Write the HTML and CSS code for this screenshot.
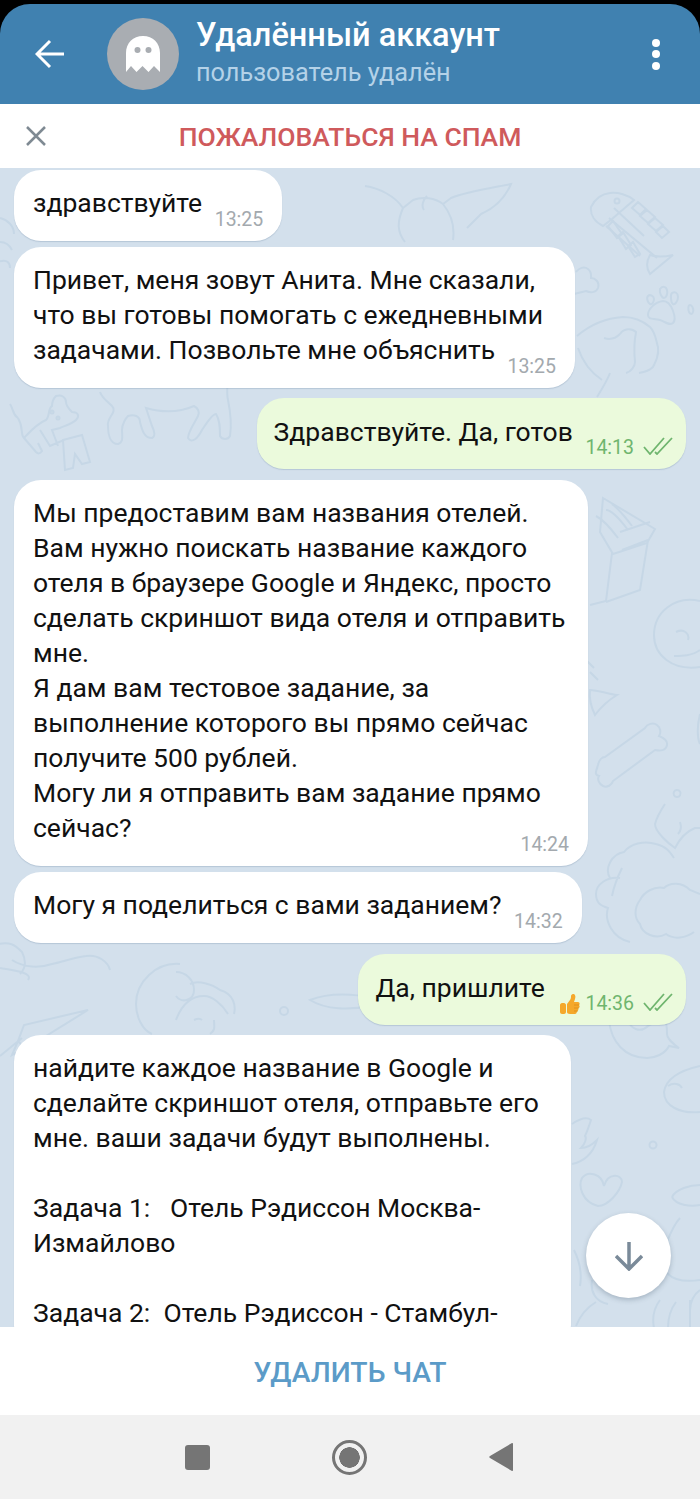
FILE: index.html
```html
<!DOCTYPE html>
<html lang="ru">

<head>
  <meta charset="UTF-8" />
  <title>Удалённый аккаунт</title>
  <link rel="stylesheet" href="styles.css">
</head>

<body>

  <div class="screen">

    <header class="chat-header">
      <svg class="back-icon" viewBox="0 0 30 30" width="30" height="30">
        <path d="M29 15H2M15 2L2 15l13 13" />
      </svg>
      <div class="avatar">
        <svg viewBox="0 0 34 36" width="34" height="36">
          <path class="ghost" d="M0 36V17C0 7 7 0 17 0s17 7 17 17v19l-6-6-5.500 6-6-6-6 6-5.500-6z" />
          <circle class="ghost-eye" cx="11.500" cy="14" r="3" />
          <circle class="ghost-eye" cx="22.500" cy="14" r="3" />
        </svg>
      </div>
      <div class="chat-title">
        <div class="chat-name">Удалённый аккаунт</div>
        <div class="chat-status">пользователь удалён</div>
      </div>
      <div class="menu-dots"><span></span><span></span><span></span></div>
    </header>

    <div class="spam-bar">
      <svg class="close-icon" viewBox="0 0 20 20" width="20" height="20">
        <path d="M1 1l18 18M19 1L1 19" />
      </svg>
      <span class="spam-link">ПОЖАЛОВАТЬСЯ НА СПАМ</span>
    </div>

    <main class="chat">

      <!-- faint wallpaper doodles, viewBox uses screen coordinates -->
      <svg class="wallpaper" viewBox="0 168 700 1160" width="700" height="1160">
        <!-- duck, top middle -->
        <path d="M365 186c14 2 30 10 38 22l10-8c10-4 22-2 30 4l8-6c14-6 40-10 60-14-6 14-16 24-30 30l-14 14M403 208c-6 14-6 24 2 34M443 204c8 10 12 22 10 36M427 196c-4 4-6 10-3 14" />
        <!-- fish skeleton -->
        <path d="M634 200c-6-5-16-8-24-7-10 1-16 8-19 14-1 8 4 15 12 19l9-7zM609 218l48 40M614 208l30 28M606 226l34 30" />
        <path d="M632 208l6-6 8 7-6 6zM640 216l7-6 8 7-7 6zM648 224l7-6 8 7-7 6zM656 232l7-6 6 6-7 6zM608 226l5-5 9 13-5 4zM618 236l5-4 8 13-5 4zM628 246l5-4 7 12-5 3z" />
        <path d="M650 255c6 2 14 2 23 0l-23 19c-4-6-4-12 0-19z" />
        <circle cx="617" cy="201" r="2.500" />
        <!-- paw -->
        <path d="M663 301c-8 1-15 8-15 14 0 5 6 3 12 5s9 6 13 3c4-4-1-22-10-22zM660 289c2-3 6-3 7 1s-1 8-3 8-5-5-4-9zM672 293c3-2 6 0 6 4s-3 8-5 7-3-9-1-11zM648 296c2-2 6 0 6 3s-2 6-4 5-4-6-2-8zM690 305c2 0 4 4 3 7s-3 2-4 0-1-7 1-7z" />
        <!-- bone beside bubble 2 -->
        <path d="M576 272c3-4 8-6 12-3 4 3 3 7 3 9 4 0 9 4 7 10-2 5-8 5-12 3l-12 3" />
        <!-- bird under paw -->
        <path d="M577 336c14-12 30-18 46-19 12 0 20 4 27 10 6 6 6 14 8 20 1 8-2 14-5 20-3 3-8 5-14 6M620 334c4-6 12-6 16-2-2 10-2 20-1 30 0 4-4 10-9 11M620 334c-4 4-10 6-16 4M578 348c4 12 12 24 24 32M610 373c-3 8-8 16-13 24" />
        <!-- left edge scraps -->
        <path d="M0 218c8 2 14 8 14 16M0 242c6 0 10 4 12 8" />
        <path d="M-2 262c10-4 12 2 12 6" />
        <!-- dog with sock -->
        <path d="M10 404c4 6 2 10 8 14M18 418c6 10 2 16 6 20 2-2 12-14 22-18 4-4 2-12 6-14 0-4 2-8 4-10 6-2 10 2 10 6 0 4 4 8 6 10 6 0 8 4 4 8-4 4-12 6-16 8l-8 2 6 16M24 438l12 14c2 2 4 2 6-1l-4-8M40 430l10 16 14-6" />
        <path d="M63 440l19-5 8 27-8 2-7-10-2 14-8 2z" />
        <circle cx="52" cy="412" r="1.500" /><circle cx="58" cy="418" r="1.500" />
        <!-- big animal, behind first bubbles -->
        <path d="M100 392c2 6 8 10 12 14 6 6-6 12-4 20 0 8 2 18 10 18 6-2 4-8 4-14 0-6 4-12 6-14 6-2 12 0 12 6 2 8 4 16 12 16 4-2 2-8 0-12-2-6-4-12-6-18 14 4 30 6 48-2 4 2 6 6 4 10-4 8-10 16-10 22 4 6 10 0 14-8 4-6 10-16 14-16 4 6 4 14 4 22 2 4 8 4 10 0 2-12 0-26-2-36-2-8 0-18 0-26" />
        <!-- box -->
        <path d="M603 498l52 31-8 14-34 11-13-22zM612 553l-6 48-16 4M648 540l-8 50-34 12M620 532l30-10M622 550l26-10" />
        <path d="M606 510c6 0 16 12 22 20M596 516c8 4 16 14 22 22M612 504c8 6 14 14 20 22" />
        <!-- circle on right -->
        <path d="M700 601c-26-6-46 12-46 34 0 20 18 36 46 32M676 632c8-4 14 2 12 8M674 656c8 0 18 0 26-6" />
        <!-- fish tail under box -->
        <path d="M590 672l8 8M586 660l8 8M590 690c8 0 18 4 27 5-10 6-16 12-22 20-4-8-6-16-5-25z" />
        <path d="M700 714c-3 12-3 24 0 30" />
        <!-- bone -->
        <path d="M605 757l40-29c2-4 8-6 12-3 4 3 4 8 2 11 4 2 9 4 8 9-1 6-7 6-12 5l-42 31c-1 4-6 7-10 5-4-2-6-7-4-10-5-1-3-5-1-11 1-5 4-8 7-8z" />
        <!-- bird and clouds -->
        <path d="M665 804c-4 6-8 12-10 20 0 8 14 20 20 24 4-8 10-16 20-20 2 0 4 0 5 0M677 790a3.500 3.500 0 1 0 .1 0M680 822c2 6 0 10-2 12" />
        <path d="M610 878c-6-10 2-24 14-26 6-8 20-12 32-8 10 2 14 8 18 14M622 868c-4 8-8 18-10 28M620 878c-12-2-24 6-24 16s6 12 12 14c-4 12 4 30 22 34M640 900c4-8 14-14 24-12 6-6 18-6 26 2l10 4M640 900c-6 8-6 18 0 24 2 10 16 16 26 10 8 6 20 4 28-2" />
        <!-- left, between bubbles 5 and 7 -->
        <path d="M-2 944c12-2 16 0 24 8 4 8 4 16-2 22M12 960c12 8 28 8 40 4 10-2 20-6 34-8 12-2 22 6 24 14M0 968c10 2 34 4 28 12" />
        <!-- paper plane -->
        <path d="M88 1010l-64 15-6 16 7 8 63-39zM18 1041l-6 14 26-14M0 1056l22-18" />
        <!-- round face -->
        <path d="M180 964c-24-2-44 18-44 40 0 12 6 26 16 30M176 972c10 0 18 8 18 18s-12 14-18 6M190 984c8-4 22 0 30 6 14 4 16 16 14 24M176 1020c6-16 16-24 28-24 8 0 18 8 24 18M194 1020c4-2 6-2 8 0M214 1020c0 6 2 10-4 14" />
        <circle cx="284" cy="1011" r="4" />
        <path d="M310 1000c20-8 46-6 62-2 6 2 4 6-2 8-20 4-44 4-60-6z" />
        <!-- circle with heart -->
        <path d="M609 1020c2 22 16 38 38 38 8 0 18-4 22-12l10 2c-6-4-12-10-12-14 0-6 0-10-2-14M628 1020c2 8 12 14 20 6 4-2 8-4 8-6" />
        <!-- right, below bubble 6 -->
        <path d="M700 1066c-18 4-34 12-36 26 0 14 16 22 36 20M668 1086c6-4 12-2 14 2" />
        <!-- wing -->
        <path d="M572 1124c6-4 14-8 19-4-2 6-4 12-6 16 2 2 0 8-4 12 4 0 10-2 16-8-4 14-14 22-25 24" />
        <circle cx="653" cy="1145" r="3.500" />
        <!-- heart -->
        <path d="M604 1186c-2-12-16-16-22-8-4 8 0 24 16 28 10 0 22-14 24-24 0-8-14-10-18 4z" />
        <!-- halo and angel -->
        <path d="M672 1197c4-8 18-12 28-12M672 1197c4 8 18 10 28 8" />
        <path d="M680 1218c-6 6-10 16-14 26M666 1244c-4 10-4 20 2 30 6 6 18 8 32 6M660 1300c-6 8-8 18-6 28M676 1302c-6 8-8 18-8 26M690 1300v28M700 1290c-6 4-10 12-10 20" />
        <path d="M574 1250c6 12 8 24 6 36M576 1326c4-10 10-18 20-24M592 1280c-2 12 4 22 16 24" />
      </svg>

      <div class="bubble in first">
        здравствуйте
        <span class="meta-inline">13:25</span>
      </div>

      <div class="bubble in w-561 gap-6">
        Привет, меня зовут Анита. Мне сказали,<br>
        что вы готовы помогать с ежедневными<br>
        задачами. Позвольте мне объяснить
        <span class="meta">13:25</span>
      </div>

      <div class="bubble out gap-10">
        Здравствуйте. Да, готов
        <span class="meta-inline out-meta">14:13
          <svg class="ticks" viewBox="0 0 30 18" width="30" height="18">
            <path d="M1 10l6 7L21 1M12 15l2 2L29 1" />
          </svg>
        </span>
      </div>

      <div class="bubble in w-574 gap-11">
        Мы предоставим вам названия отелей.<br>
        Вам нужно поискать название каждого<br>
        отеля в браузере Google и Яндекс, просто<br>
        сделать скриншот вида отеля и отправить<br>
        мне.<br>
        Я дам вам тестовое задание, за<br>
        выполнение которого вы прямо сейчас<br>
        получите 500 рублей.<br>
        Могу ли я отправить вам задание прямо<br>
        сейчас?
        <span class="meta">14:24</span>
      </div>

      <div class="bubble in gap-6">
        Могу я поделиться с вами заданием?
        <span class="meta-inline">14:32</span>
      </div>

      <div class="bubble out gap-11">
        Да, пришлите
        <span class="meta-inline out-meta liked">
          <svg class="thumb" viewBox="0 0 20 20" width="20" height="20">
            <path d="M0 11c0-1 1-2 2-2h2c1 0 2 1 2 2v7c0 1-1 2-2 2H2c-1 0-2-1-2-2z" />
            <path d="M7 10l3-4c1-1 1-3 1-4s1-2 2-2c2 0 3 2 2 5l-1 3h4c2 0 2 3 1 3 1 1 1 3-1 3 1 1 0 3-1 3 0 2-1 3-2 3h-5c-2 0-3-1-3-2z" />
            <path class="thumb-line" d="M14 11h5M14 14h5M14 17h4" />
          </svg>
          14:36
          <svg class="ticks" viewBox="0 0 30 18" width="30" height="18">
            <path d="M1 10l6 7L21 1M12 15l2 2L29 1" />
          </svg>
        </span>
      </div>

      <div class="bubble in w-557 gap-10">
        найдите каждое название в Google и<br>
        сделайте скриншот отеля, отправьте его<br>
        мне. ваши задачи будут выполнены.<br>
        <br>
        Задача 1: &nbsp; Отель Рэдиссон Москва-<br>
        Измайлово<br>
        <br>
        Задача 2: &nbsp;Отель Рэдиссон - Стамбул-
      </div>

      <button class="scroll-down">
        <svg viewBox="0 0 28 30" width="28" height="30">
          <path d="M14 1v27M1 15l13 13 13-13" />
        </svg>
      </button>

    </main>

    <div class="delete-bar">УДАЛИТЬ ЧАТ</div>

    <nav class="system-nav">
      <span class="nav-square"></span>
      <span class="nav-circle"></span>
      <svg viewBox="0 0 24 30" width="24" height="30">
        <path class="nav-back" d="M23 1c.500-.300 1 0 1 1v26c0 1-.500 1.300-1 1L1 16c-1-.500-1-1.500 0-2z" />
      </svg>
    </nav>

  </div>

</body>

</html>
```

FILE: styles.css
```css
* {
  box-sizing: border-box;
}

body {
  margin: 0;
  background: #000;
  font-family: 'Roboto', sans-serif;
  overflow: hidden;
}

.screen {
  height: 1499px;
  padding-top: 4px;
  display: flex;
  flex-direction: column;
}

/* header */
.chat-header {
  height: 100px;
  flex-shrink: 0;
  display: flex;
  align-items: center;
  padding: 0 40px 0 35px;
  background: #4081b0;
  border-radius: 30px 30px 0 0;
  color: #fff;
}

.back-icon {
  margin-right: 42px;
  fill: none;
  stroke: #fff;
  stroke-width: 3;
}

.avatar {
  width: 72px;
  height: 72px;
  margin-right: 17px;
  border-radius: 50%;
  background: #a9adb2;
  display: flex;
  align-items: center;
  justify-content: center;
}

.ghost {
  fill: #fff;
}

.ghost-eye {
  fill: #a9adb2;
}

.chat-title {
  flex: 1;
  margin-top: -4px;
}

.chat-name {
  font-size: 32.500px;
  font-weight: 500;
  line-height: 38px;
}

.chat-status {
  font-size: 25.300px;
  line-height: 30px;
  margin-top: 4px;
  color: #b4d2e8;
}

.menu-dots {
  display: flex;
  flex-direction: column;
  gap: 3.500px;
}

.menu-dots span {
  width: 8px;
  height: 8px;
  border-radius: 50%;
  background: #fff;
}

/* spam bar */
.spam-bar {
  height: 64px;
  flex-shrink: 0;
  display: flex;
  align-items: center;
  justify-content: center;
  position: relative;
  background: #fff;
}

.close-icon {
  position: absolute;
  left: 26px;
  top: 22px;
  fill: none;
  stroke: #7f8a93;
  stroke-width: 2.500;
}

.spam-link {
  font-size: 26.500px;
  font-weight: 500;
  color: #cf5a5c;
}

/* messages */
.chat {
  flex: 1;
  min-height: 0;
  position: relative;
  overflow: hidden;
  display: flex;
  flex-direction: column;
  align-items: flex-start;
  padding: 2px 14px 0;
  background: #d3e0ec;
}

.wallpaper {
  position: absolute;
  left: 0;
  top: 0;
  fill: none;
  stroke: #c6d7e6;
  stroke-width: 2;
}

.bubble {
  position: relative;
  flex-shrink: 0;
  padding: 15px 19px 21px;
  border-radius: 27px;
  font-size: 26.500px;
  line-height: 35px;
  color: #111;
  white-space: nowrap;
  box-shadow: 0 1px 1px rgba(90, 120, 150, 0.25);
}

.bubble.in {
  background: #fff;
}

.bubble.out {
  align-self: flex-end;
  padding: 16px 13px 20px 17px;
  background: #ebfadc;
}

.gap-6 {
  margin-top: 6px;
}

.gap-10 {
  margin-top: 10px;
}

.gap-11 {
  margin-top: 11px;
}

.w-561 {
  width: 561px;
}

.w-574 {
  width: 574px;
}

.w-557 {
  width: 557px;
}

.meta {
  position: absolute;
  right: 19px;
  bottom: 9px;
  font-size: 19.500px;
  line-height: 24px;
  color: #a3a9ae;
}

.meta-inline {
  display: inline-flex;
  align-items: center;
  gap: 7px;
  margin-left: 6px;
  position: relative;
  top: 14px;
  font-size: 19.500px;
  line-height: 24px;
  color: #a3a9ae;
}

.out-meta {
  top: 13px;
  color: #6fb56e;
}

/* the thumb comes first, so the row sits on its bottom edge */
.liked {
  top: 17px;
}

.ticks {
  margin: 0 0 4px 2px;
  fill: none;
  stroke: #6fb56e;
  stroke-width: 1.800;
}

.thumb {
  margin: 0 -2px 0 3px;
  fill: #f5a82b;
}

.thumb-line {
  fill: none;
  stroke: #d98a1a;
  stroke-width: 0.800;
}

.scroll-down {
  position: absolute;
  left: 586px;
  top: 1045px;
  width: 85px;
  height: 85px;
  padding: 0;
  border: none;
  border-radius: 50%;
  background: #fff;
  box-shadow: 0 2px 5px rgba(60, 80, 100, 0.3);
  display: flex;
  align-items: center;
  justify-content: center;
}

.scroll-down svg {
  fill: none;
  stroke: #7a8a99;
  stroke-width: 3.500;
}

/* bottom */
.delete-bar {
  height: 88px;
  flex-shrink: 0;
  padding-top: 2px;
  display: flex;
  align-items: center;
  justify-content: center;
  background: #fff;
  font-size: 28.300px;
  font-weight: 500;
  color: #5b9bc8;
}

.system-nav {
  height: 84px;
  flex-shrink: 0;
  display: flex;
  align-items: center;
  justify-content: center;
  gap: 122px;
  padding-right: 3px;
  background: #f1f1f1;
}

.nav-square {
  width: 25px;
  height: 25px;
  border-radius: 3px;
  background: #757575;
}

.nav-circle {
  width: 35px;
  height: 35px;
  border: 3px solid #757575;
  border-radius: 50%;
  background: radial-gradient(circle, #757575 10px, transparent 10.500px);
}

.nav-back {
  fill: #757575;
}
```
